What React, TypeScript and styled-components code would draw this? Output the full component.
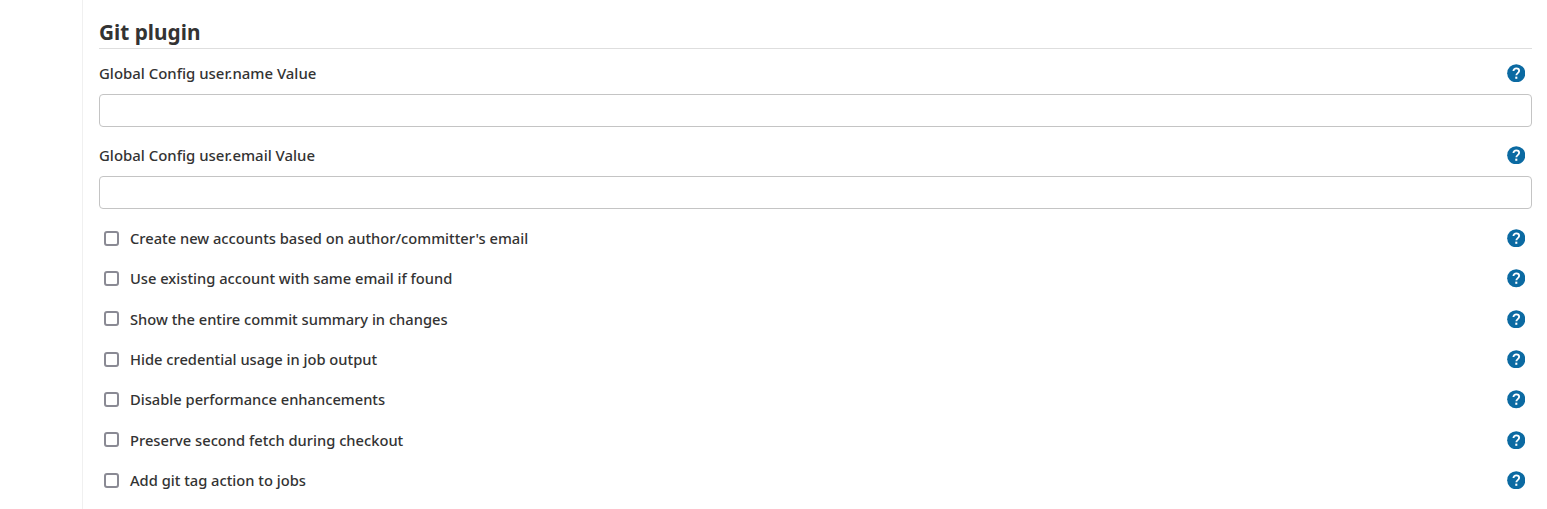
import React from 'react'
import styled, { createGlobalStyle } from 'styled-components'

const GlobalStyle = createGlobalStyle`
  html, body {
    margin: 0;
    padding: 0;
    background: #fff;
    overflow: hidden;
  }
`

const textFields = ['Global Config user.name Value', 'Global Config user.email Value']

const checkFields = [
  "Create new accounts based on author/committer's email",
  'Use existing account with same email if found',
  'Show the entire commit summary in changes',
  'Hide credential usage in job output',
  'Disable performance enhancements',
  'Preserve second fetch during checkout',
  'Add git tag action to jobs'
]

const HelpIcon: React.FC = () => (
  <HelpButton>
    <svg width='18.5' height='18.5' viewBox='0 0 19 19'>
      <circle cx='9.5' cy='9.5' r='9.3' fill='#0b6aa2' />
      <path
        d='M6.6 7.3c0-1.7 1.3-2.8 3-2.8s2.9 1 2.9 2.5c0 2.3-2.9 2.4-2.9 4.6'
        fill='none'
        stroke='#fff'
        strokeWidth='1.9'
      />
      <rect x='8.5' y='13' width='2.1' height='2.2' fill='#fff' />
    </svg>
  </HelpButton>
)

const App: React.FC = () => (
  <Page>
    <GlobalStyle />
    <Section>
      <Title>Git plugin</Title>
      {textFields.map(label => (
        <TextField key={label}>
          <LabelRow>
            <FieldLabel>{label}</FieldLabel>
            <HelpIcon />
          </LabelRow>
          <TextInput type='text' />
        </TextField>
      ))}
      <CheckList>
        {checkFields.map(label => (
          <CheckRow key={label}>
            <CheckLabel>
              <CheckBox type='checkbox' />
              {label}
            </CheckLabel>
            <HelpIcon />
          </CheckRow>
        ))}
      </CheckList>
    </Section>
  </Page>
)

const Page = styled.div`
  height: 509px;
  box-sizing: border-box;
  margin-left: 82px;
  border-left: 1px solid #f0f0f0;
  padding: 19px 0 0 16px;
  font-family: 'Noto Sans', 'Open Sans', sans-serif;
  color: #333;
`

const Section = styled.section`
  width: 1433px;
`

const Title = styled.h2`
  margin: 0 0 3px;
  height: 30px;
  box-sizing: border-box;
  border-bottom: 1px solid #dedede;
  font-size: 20.8px;
  line-height: 27px;
  font-weight: 700;
  color: #333;
`

const TextField = styled.div`
  margin-bottom: 7px;
`

const LabelRow = styled.div`
  display: flex;
  justify-content: space-between;
  align-items: center;
  height: 42px;
  padding-right: 7px;
`

const FieldLabel = styled.label`
  font-size: 14.95px;
  line-height: 21px;
  margin-top: 1px;
  font-weight: 500;
`

const HelpButton = styled.span`
  display: block;
  width: 18.5px;
  height: 18.5px;

  svg {
    display: block;
  }
`

const TextInput = styled.input`
  display: block;
  width: 100%;
  height: 33px;
  box-sizing: border-box;
  border: 1px solid #c4c4c4;
  border-radius: 4px;
  background: #fff;
`

const CheckList = styled.div`
  display: flex;
  flex-direction: column;
  gap: 20px;
  margin-top: 19px;
`

const CheckRow = styled.div`
  display: flex;
  justify-content: space-between;
  align-items: center;
  height: 20.33px;
  padding-right: 7px;
`

const CheckLabel = styled.label`
  display: flex;
  align-items: center;
  gap: 11px;
  padding-left: 5px;
  font-size: 14.7px;
  font-weight: 500;
`

const CheckBox = styled.input`
  appearance: none;
  width: 15px;
  height: 15px;
  box-sizing: border-box;
  margin: 0;
  border: 2px solid #8a8a94;
  border-radius: 3px;
  background: #fff;
`

export default App
